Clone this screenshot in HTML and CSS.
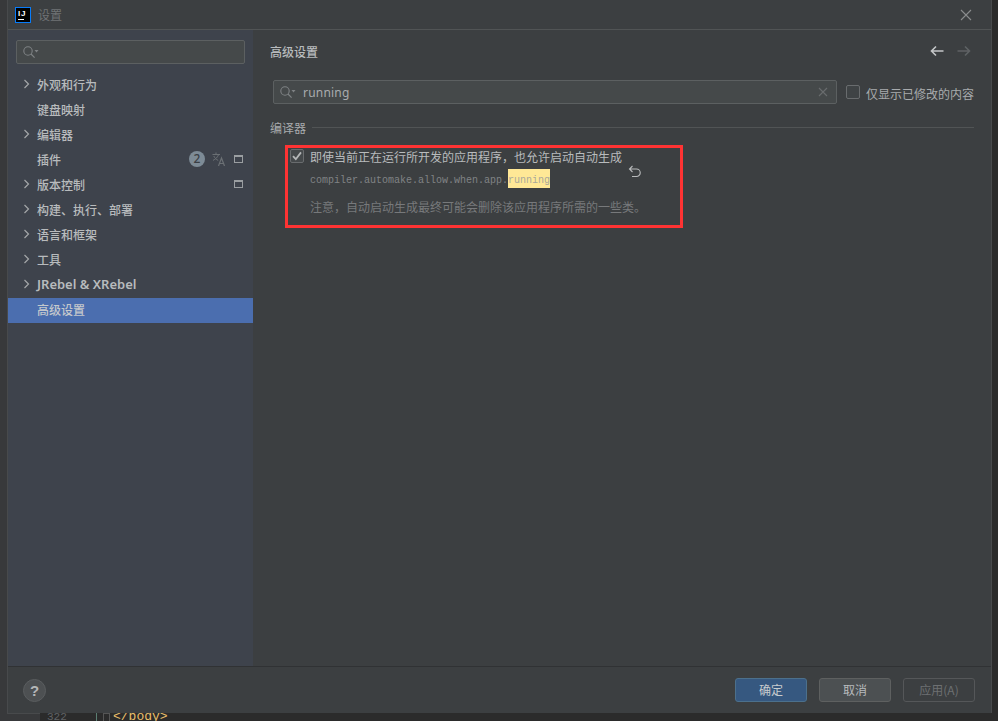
FILE: index.html
```html
<!DOCTYPE html>
<html lang="zh-CN">
<head>
  <meta charset="UTF-8" />
  <title>设置</title>
  <link rel="stylesheet" href="styles.css">
</head>
<body>
  <div class="window">
    <header class="titlebar">
      <div class="logo"><span class="logo-text">IJ</span><span class="logo-bar"></span></div>
      <span class="title">设置</span>
      <svg class="close" width="12" height="12" viewBox="0 0 12 12"><path d="M1 1l10 10M11 1L1 11" stroke="#8b8d8e" stroke-width="1.1" fill="none"/></svg>
    </header>

    <div class="content">
      <aside class="sidebar">
        <div class="search side-search">
          <svg class="search-icon" width="18" height="14" viewBox="0 0 18 14"><circle cx="6" cy="6" r="4.2" stroke="#7e8284" stroke-width="1.1" fill="none"/><path d="M9 9l3.6 3.6" stroke="#7e8284" stroke-width="1.2"/><path d="M12.5 5h4l-2 2.4z" fill="#7e8284"/></svg>
        </div>
        <ul class="tree">
          <li class="row"><svg class="chev" width="8" height="10" viewBox="0 0 8 10"><path d="M1.5 1l4 4-4 4" stroke="#a4a7a9" stroke-width="1.2" fill="none"/></svg><span>外观和行为</span></li>
          <li class="row no-chev"><span>键盘映射</span></li>
          <li class="row"><svg class="chev" width="8" height="10" viewBox="0 0 8 10"><path d="M1.5 1l4 4-4 4" stroke="#a4a7a9" stroke-width="1.2" fill="none"/></svg><span>编辑器</span></li>
          <li class="row no-chev"><span>插件</span>
            <span class="row-icons">
              <span class="badge">2</span>
              <svg class="translate" width="14" height="14" viewBox="0 0 14 14"><path d="M0.5 2.5h7.5M4 0.5v2M6.6 2.5C5.8 5 3.6 7.2 1 8.4M1.8 4c.8 2 2.6 3.6 4.4 4.4" stroke="#6b7074" stroke-width="1" fill="none"/><path d="M6.5 14l3-8 3 8M7.6 11.5h3.8" stroke="#6b7074" stroke-width="1.2" fill="none"/></svg>
              <span class="scope"></span>
            </span>
          </li>
          <li class="row"><svg class="chev" width="8" height="10" viewBox="0 0 8 10"><path d="M1.5 1l4 4-4 4" stroke="#a4a7a9" stroke-width="1.2" fill="none"/></svg><span>版本控制</span>
            <span class="row-icons"><span class="scope"></span></span>
          </li>
          <li class="row"><svg class="chev" width="8" height="10" viewBox="0 0 8 10"><path d="M1.5 1l4 4-4 4" stroke="#a4a7a9" stroke-width="1.2" fill="none"/></svg><span>构建、执行、部署</span></li>
          <li class="row"><svg class="chev" width="8" height="10" viewBox="0 0 8 10"><path d="M1.5 1l4 4-4 4" stroke="#a4a7a9" stroke-width="1.2" fill="none"/></svg><span>语言和框架</span></li>
          <li class="row"><svg class="chev" width="8" height="10" viewBox="0 0 8 10"><path d="M1.5 1l4 4-4 4" stroke="#a4a7a9" stroke-width="1.2" fill="none"/></svg><span>工具</span></li>
          <li class="row"><svg class="chev" width="8" height="10" viewBox="0 0 8 10"><path d="M1.5 1l4 4-4 4" stroke="#a4a7a9" stroke-width="1.2" fill="none"/></svg><span class="latin">JRebel &amp; XRebel</span></li>
          <li class="row no-chev selected"><span>高级设置</span></li>
        </ul>
      </aside>

      <main class="panel">
        <div class="panel-head">
          <h2>高级设置</h2>
          <div class="nav-arrows">
            <svg width="14" height="12" viewBox="0 0 14 12"><path d="M13.5 6H1.5M6 1.5L1.5 6 6 10.5" stroke="#c4c6c7" stroke-width="1.6" fill="none"/></svg>
            <svg width="14" height="12" viewBox="0 0 14 12"><path d="M0.5 6h12M8 1.5L12.5 6 8 10.5" stroke="#5f6264" stroke-width="1.6" fill="none"/></svg>
          </div>
        </div>

        <div class="filter">
          <div class="search main-search">
            <svg class="search-icon" width="18" height="14" viewBox="0 0 18 14"><circle cx="6" cy="6" r="4.2" stroke="#7e8284" stroke-width="1.1" fill="none"/><path d="M9 9l3.6 3.6" stroke="#7e8284" stroke-width="1.2"/><path d="M12.5 5h4l-2 2.4z" fill="#7e8284"/></svg>
            <span class="query">running</span>
            <svg class="clear" width="10" height="10" viewBox="0 0 10 10"><path d="M1 1l8 8M9 1L1 9" stroke="#696c6e" stroke-width="1.1" fill="none"/></svg>
          </div>
          <span class="box"></span>
          <span class="filter-label">仅显示已修改的内容</span>
        </div>

        <div class="group-title"><span>编译器</span><i></i></div>

        <div class="option">
          <div class="option-main">
            <span class="box checked"><svg width="14" height="14" viewBox="0 0 14 14"><path d="M3 7.2l2.8 3L11 3.4" stroke="#b5b7b8" stroke-width="1.8" fill="none"/></svg></span>
            <span>即使当前正在运行所开发的应用程序，也允许启动自动生成</span>
          </div>
          <div class="option-id">compiler.automake.allow.when.app.<mark>running</mark></div>
          <p class="option-note">注意，自动启动生成最终可能会删除该应用程序所需的一些类。</p>
          <svg class="revert" width="14" height="13" viewBox="0 0 14 13"><path d="M4.5 1L1.5 4l3 3M1.5 4h7a3.6 3.6 0 0 1 0 7.5H4" stroke="#b9bbbc" stroke-width="1.1" fill="none"/></svg>
          <div class="annotation"></div>
        </div>
      </main>
    </div>

    <footer class="footer">
      <span class="help">?</span>
      <div class="buttons">
        <button class="btn primary">确定</button>
        <button class="btn">取消</button>
        <button class="btn disabled">应用(A)</button>
      </div>
    </footer>
  </div>

  <div class="editor"><span class="line-no">322</span><span class="gutter"></span><span class="fold"></span><span class="tag">&lt;/body&gt;</span></div>
</body>
</html>
```
FILE: styles.css
```css
* {
  box-sizing: border-box;
}

html, body {
  margin: 0;
  padding: 0;
}

body {
  width: 998px;
  height: 721px;
  overflow: hidden;
  background: linear-gradient(90deg, #38393b 40px, #2b2b2b 40px);
  font-family: "Noto Sans CJK SC", "Noto Sans", sans-serif;
  font-size: 12px;
  color: #b4b7b9;
}

.window {
  width: 983px;
  height: 713px;
  margin-left: 8px;
  display: flex;
  flex-direction: column;
  background: #3c3f41;
  box-shadow: 0 0 0 1px #484a4c;
}

.titlebar {
  height: 30px;
  flex: none;
  display: flex;
  align-items: center;
  padding-left: 7px;
  padding-right: 19px;
  border-bottom: 1px solid #515455;
}

.logo {
  width: 16px;
  height: 16px;
  margin-top: 1px;
  background: #000;
  border: 1px solid #087cfa;
  display: flex;
  flex-direction: column;
  padding: 2px 2px;
}

.logo-text {
  font-family: "Liberation Sans", sans-serif;
  font-size: 8px;
  font-weight: bold;
  line-height: 7px;
  color: #fff;
  letter-spacing: 0.8px;
}

.logo-bar {
  width: 6px;
  height: 1px;
  margin-top: 2px;
  background: #fff;
}

.title {
  margin-left: 7px;
  color: #707375;
}

.close {
  margin-left: auto;
}

.content {
  flex: 1;
  display: flex;
  min-height: 0;
}

.sidebar {
  width: 245px;
  flex: none;
  background: #3e434c;
  padding-top: 10px;
}

.search {
  height: 24px;
  display: flex;
  align-items: center;
  background: #45494a;
  border: 1px solid #5c6061;
  border-radius: 2px;
  padding-left: 5px;
}

.side-search {
  width: 229px;
  margin-left: 8px;
}

.tree {
  list-style: none;
  margin: 9px 0 0;
  padding: 0;
}

.row {
  height: 25px;
  display: flex;
  align-items: center;
  padding-left: 15px;
  padding-bottom: 3px;
  font-weight: 500;
  color: #b8bbbd;
}

.no-chev {
  padding-left: 29px;
}

.chev {
  margin-right: 6px;
  flex: none;
}

.latin {
  font-family: "Noto Sans", sans-serif;
  font-size: 13px;
  font-weight: 600;
}

.selected {
  background: #4b6eaf;
  color: #c4c8cc;
}

.row-icons {
  margin-left: auto;
  margin-right: 10px;
  display: flex;
  align-items: center;
}

.badge {
  width: 16px;
  height: 16px;
  border-radius: 50%;
  background: #7d8b96;
  color: #3a3e44;
  font-family: "Noto Sans", sans-serif;
  font-size: 12px;
  line-height: 16px;
  text-align: center;
}

.translate {
  margin: 0 8px 0 7px;
}

.scope {
  width: 9px;
  height: 8px;
  border: 1px solid #9a9ea1;
  border-top-width: 2px;
}

.panel {
  flex: 1;
  padding: 0 17px;
}

.panel-head {
  display: flex;
  align-items: center;
  justify-content: space-between;
  height: 44px;
  padding-bottom: 2px;
  padding-right: 3px;
}

.panel-head h2 {
  margin: 0;
  font-size: 12px;
  font-weight: 500;
  color: #b8bbbd;
}

.nav-arrows {
  display: flex;
  gap: 13px;
}

.filter {
  display: flex;
  align-items: center;
  margin: 6px 0 0 3px;
}

.main-search {
  width: 564px;
}

.query {
  margin-left: 6px;
  font-family: "Noto Sans", sans-serif;
  font-size: 12px;
  letter-spacing: 0.2px;
  color: #a9acae;
}

.clear {
  margin-left: auto;
  margin-right: 8px;
}

.box {
  width: 14px;
  height: 14px;
  flex: none;
  background: #3f4345;
  border: 1px solid #696c6e;
  border-radius: 2px;
}

.filter .box {
  margin-left: 9px;
}

.filter-label {
  margin-left: 6px;
  padding-top: 2px;
  color: #a8abad;
}

.group-title {
  display: flex;
  align-items: center;
  gap: 6px;
  margin-top: 14px;
  height: 18px;
  color: #a8abad;
}

.group-title i {
  flex: 1;
  height: 1px;
  background: #515455;
}

.option {
  position: relative;
  margin: 13px 0 0 20px;
}

.option-main {
  display: flex;
  align-items: center;
  gap: 6px;
  height: 14px;
  color: #b8bbbd;
}

.checked {
  background: #45494b;
  display: block;
}

.checked svg {
  display: block;
  margin: -1px;
}

.option-id {
  margin: 6px 0 0 20px;
  height: 19px;
  line-height: 23px;
  font-family: "Liberation Mono", monospace;
  font-size: 10px;
  color: #808385;
}

.option-id mark {
  padding: 6px 0 2px;
  background: #ffe896;
  color: #a9a99a;
}

.option-note {
  margin: 10px 0 0 20px;
  color: #77797b;
}

.revert {
  position: absolute;
  left: 338px;
  top: 16px;
}

.annotation {
  position: absolute;
  left: -5px;
  top: -4px;
  width: 398px;
  height: 83px;
  border: 3px solid #ff3333;
}

.footer {
  height: 47px;
  flex: none;
  display: flex;
  align-items: center;
  justify-content: space-between;
  padding: 0 16px 0 15px;
  border-top: 1px solid #303234;
}

.help {
  width: 23px;
  height: 23px;
  border-radius: 50%;
  background: #4d5052;
  border: 1px solid #5a5d5f;
  color: #b5b7b8;
  font-family: "Liberation Sans", sans-serif;
  font-size: 15px;
  font-weight: bold;
  line-height: 21px;
  text-align: center;
}

.buttons {
  display: flex;
  gap: 12px;
}

.btn {
  width: 72px;
  height: 24px;
  padding: 0 0 2px;
  background: #4c5052;
  border: 1px solid #5e6060;
  border-radius: 3px;
  font-family: inherit;
  font-size: 12px;
  color: #b8bbbd;
}

.primary {
  background: #365880;
  border-color: #4c708c;
  color: #c9ccce;
}

.disabled {
  background: #3c3f41;
  border-color: #555759;
  color: #6d7072;
}

.editor {
  height: 8px;
  margin-left: 40px;
  width: 958px;
  overflow: hidden;
  display: flex;
  background: #2b2b2b;
  font-family: "Liberation Mono", monospace;
  font-size: 13px;
  line-height: 14px;
}

.line-no {
  width: 56px;
  margin-top: -3px;
  padding-left: 7px;
  font-size: 11px;
  color: #606366;
}

.gutter {
  width: 7px;
  border-left: 1px solid #5b7f73;
}

.fold {
  width: 7px;
  height: 8px;
  border: 1px solid #555;
  border-bottom: 0;
}

.tag {
  margin-top: -3px;
  margin-left: 3px;
  color: #e8bf6a;
}
```
